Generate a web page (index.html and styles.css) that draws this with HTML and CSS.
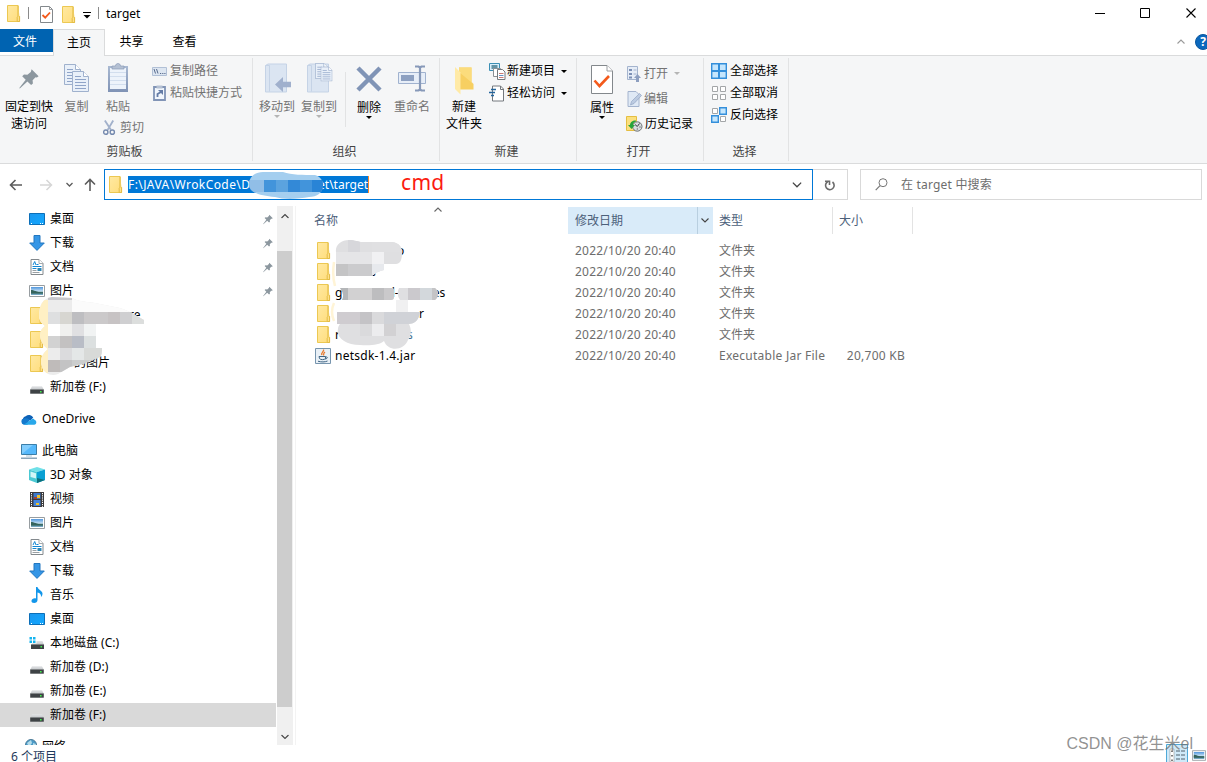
FILE: index.html
```
<!DOCTYPE html>
<html lang="zh-CN">
<head>
    <meta charset="UTF-8">
    <meta name="viewport" content="width=device-width, initial-scale=1.0">
    <title>target</title>
    <link rel="stylesheet" href="styles.css">
</head>
<body>
    <!-- icon definitions -->
    <svg class="defs" width="0" height="0">
        <defs>
            <linearGradient id="gFolder" x1="0" x2="1" y1="0" y2="1"><stop offset="0" stop-color="#ffe9a2"/><stop offset="1" stop-color="#ffdd7c"/></linearGradient>
            <linearGradient id="gBlue" x1="0" x2="1" y1="0" y2="1"><stop offset="0" stop-color="#1b96ee"/><stop offset="1" stop-color="#12a8ff"/></linearGradient>
            <linearGradient id="gDisk" x1="0" x2="0" y1="0" y2="1"><stop offset="0" stop-color="#e2e4e6"/><stop offset="1" stop-color="#c0c3c6"/></linearGradient>
            <linearGradient id="gSteel" x1="0" x2="0" y1="0" y2="1"><stop offset="0" stop-color="#a9b9d2"/><stop offset="1" stop-color="#7f92b5"/></linearGradient>
            <linearGradient id="gSky" x1="0" x2="0" y1="0" y2="1"><stop offset="0" stop-color="#4f95dc"/><stop offset=".55" stop-color="#c9e3f5"/><stop offset=".6" stop-color="#3d6d66"/><stop offset="1" stop-color="#7fb2d4"/></linearGradient>
        </defs>
        <symbol id="folder" viewBox="0 0 14 17">
            <path d="M.5.5h10.6v11h1.4v5H.5z" fill="url(#gFolder)" stroke="#ecc852"/>
            <path d="M11.1.8v10.4l-.9 1v4.3h2.4v-5.3" fill="#ffe08a" stroke="#e3bc45"/>
        </symbol>
        <symbol id="pin" viewBox="0 0 20 20">
            <path d="M12.6.3l7 7-1.7 1.2-1.4-.2-2.9 3 .3 3.1-1.8 1.6-3.7-3.6L.8 19.5l-.5-.6 6.4-8.2L3.2 7.2 5 5.5l3.4.3L11.8 3z" fill="#8c979f"/>
        </symbol>
        <symbol id="sheet" viewBox="0 0 17 21">
            <path d="M.5.5h11l5 5v15H.5z" fill="#e9f0f9" stroke="#9fb1cd"/>
            <path d="M11.500.5v5h5" fill="#fff" stroke="#9fb1cd"/>
            <path d="M3 5.500h6M3 8.500h11M3 11.500h11M3 14.500h11M3 17.500h11" stroke="#8fa4c8"/>
        </symbol>
        <symbol id="desktop" viewBox="0 0 16 12">
            <path d="M.5.5h15v11H.5z" fill="url(#gBlue)" stroke="#0c6fb8"/>
            <path d="M2 10.500h1M11 10.500h1M13 10.500h1" stroke="#fff"/>
        </symbol>
        <symbol id="download" viewBox="0 0 16 16">
            <path d="M5 .5h6V8h4.300L8 15.400.7 8H5z" fill="#3596e6" stroke="#2377c0"/>
        </symbol>
        <symbol id="document" viewBox="0 0 13 16">
            <path d="M.5.5h8l4 4v11H.5z" fill="#fff" stroke="#83898d"/>
            <path d="M8.500.5v4h4" fill="#fff" stroke="#a5aaad"/>
            <path d="M2.500 6l1.700-3.500L5.500 6M6 5.500h2M2 7.500h9M2 9.500h4" fill="none" stroke="#1287d4"/>
            <path d="M2 11.500h4M2 13.500h7" stroke="#9aa0a4"/>
            <path d="M7 9h4v3H7z" fill="#2f86b5"/>
        </symbol>
        <symbol id="picture" viewBox="0 0 16 12">
            <path d="M.5.5h15v11H.5z" fill="#fff" stroke="#979da1"/>
            <path d="M2 2h12v8H2z" fill="url(#gSky)"/>
            <path d="M2 5c3 0 5 2 12 2.500V8.500H2z" fill="#35645d"/>
        </symbol>
        <symbol id="disk" viewBox="0 0 14 8">
            <path d="M2 .3h10L14 4H0z" fill="url(#gDisk)"/>
            <path d="M.2 3.500h13.600v4.200H.2z" fill="#3e4245"/>
            <path d="M10 5h1.600v1.600H10z" fill="#41f24d"/>
        </symbol>
        <symbol id="cloud" viewBox="0 0 17 11">
            <path d="M2 6a4 4 0 0 1 3-4 5 5 0 0 1 8 1.500l-3 3z" fill="#0e62b7"/>
            <path d="M.5 8A3 3 0 0 1 3 4.500C5 3.700 7 4 9 5.500L7 11H3A3 3 0 0 1 .5 8z" fill="#1579cd"/>
            <path d="M3 11l8-5.500c1-1.500 3-1 3.500.500C17 6.500 17 11 14 11z" fill="#28a8ea"/>
        </symbol>
        <symbol id="computer" viewBox="0 0 16 15">
            <path d="M.5.5h15v10H.5z" fill="#55b8fb" stroke="#3b7ea8"/>
            <path d="M1 10V1h11z" fill="#82cdfd"/>
            <path d="M5 12h6" stroke="#a9c6d8"/>
            <path d="M0 14.200h16" stroke="#7797ae" stroke-width="1.300"/>
        </symbol>
        <symbol id="cube" viewBox="0 0 16 16">
            <path d="M8 0l8 2.500L8 5 0 2.500z" fill="#6fe0e8"/>
            <path d="M0 2.500L8 5v11l-8-3z" fill="#4cc9d3"/>
            <path d="M1.500 4.500L7 6.300v5.200L1.500 10z" fill="#d3f6f7"/>
            <path d="M8 5l8-2.500V13l-8 3z" fill="#0aa0d3"/>
            <path d="M8 11l8 2-8 3z" fill="#0c717c"/>
        </symbol>
        <symbol id="film" viewBox="0 0 14 15">
            <path d="M0 0h14v15H0z" fill="#3b3b3d"/>
            <path d="M1.500 1v14M12.500 1v14" stroke="#fff" stroke-dasharray="1.200 1"/>
            <path d="M3.500 1h7v6h-7z" fill="#3b78cd"/><path d="M3.500 8h7v6h-7z" fill="#4485dc"/>
            <path d="M7 3h3v3H7z" fill="#edc22d"/><path d="M4 5h3v2H4z" fill="#a63f32"/><path d="M6 11h3v2H6z" fill="#edc22d"/>
        </symbol>
        <symbol id="music" viewBox="0 0 12 16">
            <path d="M5 0h1.500c.5 3 5 3.500 5 6.500 0 1.500-.5 2.500-1.500 3.500.3-2.500-1-4-3.500-4.500V13c0 2-1.500 3-3.300 3S.3 15 .5 13.700c.2-1.700 2.500-2.900 4.500-2.200z" fill="#1296ea"/>
        </symbol>
        <symbol id="sysdisk" viewBox="0 0 15 12">
            <path d="M0 0h2.500v2.500H0zM3.500 0H6v2.500H3.500zM0 3.500h2.500V6H0zM3.500 3.500H6V6H3.500z" fill="#14b4ef"/>
            <path d="M7 4h6l1.500 4H1.500L3 6.500h4z" fill="url(#gDisk)"/>
            <path d="M1.500 7.500h13V12h-13z" fill="#3e4245"/><path d="M11 9h1.500v1.500H11z" fill="#41f24d"/>
        </symbol>
        <symbol id="globe" viewBox="0 0 16 16">
            <circle cx="6" cy="6" r="5.500" fill="#4b9bc8" stroke="#4a7a98"/>
            <path d="M2 4l4-3 1 3-3 4zM8 4l3 1-1 4-2-1z" fill="#b5dcea"/>
        </symbol>
        <symbol id="cross" viewBox="0 0 10 10"><path d="M.5.5l9 9M9.500.5l-9 9" stroke="#000" stroke-width="1.100"/></symbol>
        <symbol id="chev" viewBox="0 0 8 5"><path d="M.5.5L4 4 7.500.5" fill="none" stroke="currentColor" stroke-width="1.100"/></symbol>
        <symbol id="check" viewBox="0 0 22 29">
            <path d="M.5.5h15.500l5.500 5.500v22.500H.5z" fill="#fff" stroke="#83888c"/>
            <path d="M16 .5V6h5.500" fill="#fff" stroke="#9a9ea1"/>
            <path d="M3.500 15.500l5 5.500 9.500-10" fill="none" stroke="#f35a1c" stroke-width="2.600"/>
        </symbol>
        <symbol id="book" viewBox="0 0 26 30">
            <path d="M.5 2.500L3 1h18.500v28H.5z" fill="#dbe5f2" stroke="#c5d3e6"/>
            <path d="M.5 2.500h4v26" fill="none" stroke="#c5d3e6"/>
        </symbol>
    </svg>

    <div class="window">
        <header class="titlebar">
            <svg class="t-folder" width="14" height="17"><use href="#folder"/></svg>
            <i class="bar"></i>
            <svg class="t-check" width="13" height="17" viewBox="0 0 13 17"><path d="M.5.5h9l3 3v13H.5z" fill="#fff" stroke="#83888c"/><path d="M9.500.5v3h3" fill="none" stroke="#9a9ea1"/><path d="M2.500 9l2.700 2.700L10 6.500" fill="none" stroke="#f35a1c" stroke-width="1.800"/></svg>
            <svg class="t-folder2" width="14" height="17"><use href="#folder"/></svg>
            <svg class="t-more" width="8" height="7"><path d="M0 .5h8" stroke="#000"/><path d="M.5 3h7L4 6.500z"/></svg>
            <i class="bar"></i>
            <span class="title">target</span>
            <div class="controls">
                <svg width="10" height="10"><path d="M0 5.500h10" stroke="#000"/></svg>
                <svg width="10" height="10"><path d="M.5.5h9v9h-9z" fill="none" stroke="#000"/></svg>
                <svg width="10" height="10"><use href="#cross"/></svg>
            </div>
        </header>

        <nav class="tabs">
            <span class="tab file">文件</span>
            <span class="tab active">主页</span>
            <span class="tab">共享</span>
            <span class="tab">查看</span>
            <div class="help">
                <svg class="up" width="8" height="5"><use href="#chev"/></svg>
                <span class="question">?</span>
            </div>
        </nav>

        <section class="ribbon">
            <div class="group clipboard">
                <div class="tools">
                    <div class="big pinit">
                        <svg width="20" height="20"><use href="#pin"/></svg>
                        <span>固定到快<br>速访问</span>
                    </div>
                    <div class="big copy off">
                        <svg width="26" height="30" viewBox="0 0 26 30"><use href="#sheet" width="17" height="21" x="0" y="1"/><use href="#sheet" width="17" height="21" x="8" y="8"/></svg>
                        <span>复制</span>
                    </div>
                    <div class="paste">
                        <div class="big off">
                            <svg width="20" height="30" viewBox="0 0 20 30">
                                <path d="M0 3h20v26H0z" fill="url(#gSteel)"/><path d="M2 5h16v21H2z" fill="#edf3fb"/>
                                <path d="M2 9.500h16M2 13.500h16M2 17.500h16M2 21.500h16" stroke="#d2deee"/>
                                <path d="M4 6V3h3.500C7.500-.3 12.500-.3 12.500 3H16v3z" fill="#b4c0d3" stroke="#8b9bb8" stroke-width=".7"/>
                            </svg>
                            <span>粘贴</span>
                        </div>
                        <div class="small off cut">
                            <svg width="13" height="16" viewBox="0 0 14 16"><path d="M2 0l6.500 10M11 0L5 10" stroke="#a2b1cb" stroke-width="2"/><circle cx="3" cy="12.500" r="2.300" fill="none" stroke="#7489ae" stroke-width="1.500"/><circle cx="10" cy="12.500" r="2.300" fill="none" stroke="#7489ae" stroke-width="1.500"/></svg>
                            <span>剪切</span>
                        </div>
                    </div>
                    <div class="stack">
                        <div class="small off">
                            <svg width="15" height="9" viewBox="0 0 15 9"><path d="M.5.5h14v8H.5z" fill="#dde6f1" stroke="#b1c0d6"/><path d="M2 2l1.500 4.500M4.500 2L6 6.500M8 6.500h1.200M10.200 6.500h1.200M12.300 6.500h1.200" stroke="#586b8d"/></svg>
                            <span>复制路径</span>
                        </div>
                        <div class="small off">
                            <svg width="15" height="16" viewBox="-1 0 15 16"><path d="M1 2h11v13H1z" fill="#f1f6fc" stroke="#8194b6" stroke-width="1.800"/><path d="M3.500.5h6v3h-6z" fill="#b4c0d3"/><path d="M4.500 12V9L8 7" fill="none" stroke="#657ca6" stroke-width="1.800"/><path d="M5 5h5v5z" fill="#657ca6"/></svg>
                            <span>粘贴快捷方式</span>
                        </div>
                    </div>
                </div>
                <div class="caption">剪贴板</div>
            </div>

            <div class="group organize">
                <div class="tools">
                    <div class="big off">
                        <svg width="27" height="30" viewBox="0 0 27 30"><use href="#book" width="26" height="30" x="1" y="0"/><path d="M11 21.500l8-7.500v4.700h8v5.600h-8v4.700z" fill="#a0b0cd"/></svg>
                        <span>移动到</span><i class="caret"></i>
                    </div>
                    <div class="big off">
                        <svg width="27" height="30" viewBox="0 0 27 30"><use href="#book" width="26" height="30" x="1" y="0"/><use href="#sheet" width="13" height="16" x="9" y="0"/><use href="#sheet" width="12" height="15" x="14.500" y="3.500"/></svg>
                        <span>复制到</span><i class="caret"></i>
                    </div>
                    <i class="divider"></i>
                    <div class="big del">
                        <svg width="26" height="26" viewBox="0 0 26 26"><path d="M2 2l22 22M24 2L2 24" stroke="#8094b6" stroke-width="4.500"/></svg>
                        <span>删除</span><i class="caret"></i>
                    </div>
                    <div class="big off rename">
                        <svg width="28" height="27" viewBox="0 0 28 27"><path d="M.5 7.500h27v11H.5z" fill="#e7eef8" stroke="#a0b2cf"/><path d="M3 10h13v6H3z" fill="#8da0c1"/><path d="M17 1.500h3.500l1.500 1 1.500-1H27M17 25.500h3.500l1.500-1 1.500 1H27M22 2v23" fill="none" stroke="#8799b9" stroke-width="2.200"/></svg>
                        <span>重命名</span>
                    </div>
                </div>
                <div class="caption">组织</div>
            </div>

            <div class="group create">
                <div class="tools">
                    <div class="big">
                        <svg width="19" height="28" viewBox="0 0 19 28"><path d="M4 .5h12.500V15l2 2v5.500H4z" fill="#f7cf61"/><path d="M4 .5h12.500V15l2 2L4 5z" fill="#fbdc7c"/><path d="M0 0l5.500 5.500V27.500L0 22z" fill="#ffeaa6"/></svg>
                        <span>新建<br>文件夹</span>
                    </div>
                    <div class="stack">
                        <div class="small">
                            <svg width="17" height="17" viewBox="0 0 17 17"><path d="M.5.5h10v7H.5z" fill="#d8eefb" stroke="#3b8fb5"/><path d="M2.500 2h6v4h-6z" fill="#6393a5"/><path d="M4.500 5.500h7v8h-7z" fill="#fff" stroke="#8b9095"/><path d="M8.500 6.500h5l2.500 2.500v7.500H8.500z" fill="#fff" stroke="#74797e"/><path d="M10 10.500h4.500M10 14.500h4.500" stroke="#ca7b72"/><path d="M10 12.500h4.500" stroke="#6592c5"/></svg>
                            <span>新建项目</span><i class="caret"></i>
                        </div>
                        <div class="small">
                            <svg width="17" height="17" viewBox="0 0 17 17"><path d="M3.500 1h8l3 3v12h-11z" fill="#fff" stroke="#74797e"/><path d="M11.500 1v3.500h3" fill="none" stroke="#74797e"/><path d="M2 4.500h5M0 7.500h6M2 10.500h3" stroke="#24669d" stroke-width="1.300"/></svg>
                            <span>轻松访问</span><i class="caret"></i>
                        </div>
                    </div>
                </div>
                <div class="caption">新建</div>
            </div>

            <div class="group open">
                <div class="tools">
                    <div class="big prop">
                        <svg width="22" height="29"><use href="#check"/></svg>
                        <span>属性</span><i class="caret"></i>
                    </div>
                    <div class="stack">
                        <div class="small off">
                            <svg width="16" height="16" viewBox="-1 0 16 16"><path d="M.5.5h10v13H.5z" fill="#e6edf7" stroke="#a4b4ce"/><path d="M2 3h3v2H2zM2 7h3v2H2zM2 10.500h3v2H2z" fill="#7d91b6"/><path d="M6.500 4h3M6.500 8h3" stroke="#a4b4ce"/><path d="M7 12l3.500-4 3.500 4h-2v4H9v-4z" fill="#8d9fc0"/></svg>
                            <span>打开</span><i class="caret"></i>
                        </div>
                        <div class="small off">
                            <svg width="16" height="16" viewBox="-1.500 0 16 16"><path d="M.5.5h8l3 3v12H.5z" fill="#dfe9f5" stroke="#a4b4ce"/><path d="M3 14l1-3.500L12 2.500 14 4.500 6.500 12.500z" fill="#bccbe1" stroke="#92a5c3" stroke-width=".7"/></svg>
                            <span>编辑</span>
                        </div>
                        <div class="small">
                            <svg width="17" height="16" viewBox="0 0 17 16"><path d="M.5.5h10v14H.5z" fill="#fbe07e" stroke="#e5be42"/><circle cx="11.300" cy="10.500" r="4.700" fill="#d9dddf" stroke="#6d7376"/><path d="M9 8.500l2.300 2 2.200-3M11.300 13.500v-1M13.500 11h1" fill="none" stroke="#34393c"/><path d="M10 4.500C6 4 4 7 4 9H2l3.500 4L9 9H7c0-2 1-3 3-3.500z" fill="#27a33a"/></svg>
                            <span>历史记录</span>
                        </div>
                    </div>
                </div>
                <div class="caption">打开</div>
            </div>

            <div class="group select">
                <div class="tools">
                    <div class="stack">
                        <div class="small">
                            <svg width="16" height="16" viewBox="0 0 16 16"><path d="M.7.700h14.600v14.600H.7z" fill="#c5e6fd" stroke="#348fdb" stroke-width="1.400"/><path d="M8 0v16M0 8h16" stroke="#348fdb" stroke-width="2"/></svg>
                            <span>全部选择</span>
                        </div>
                        <div class="small">
                            <svg width="16" height="16" viewBox="0 0 16 16"><path d="M1.500 1.500h5v5h-5zM9.500 1.500h5v5h-5zM1.500 9.500h5v5h-5zM9.500 9.500h5v5h-5z" fill="#fff" stroke="#a3a6a8"/></svg>
                            <span>全部取消</span>
                        </div>
                        <div class="small">
                            <svg width="16" height="16" viewBox="0 0 16 16"><path d="M1.500 1.500h5v5h-5zM9.500 9.500h5v5h-5z" fill="#fff" stroke="#a3a6a8"/><path d="M8.700.700h6.600v6.600H8.700zM.7 8.700h6.600v6.600H.7z" fill="#c5e6fd" stroke="#348fdb" stroke-width="1.400"/></svg>
                            <span>反向选择</span>
                        </div>
                    </div>
                </div>
                <div class="caption">选择</div>
            </div>
        </section>

        <section class="address">
            <svg class="nav-icons" width="104" height="31" viewBox="0 0 104 31">
                <path d="M22 16H11M15.500 11L10.500 16l5 5" fill="none" stroke="#5c5c5c" stroke-width="1.600"/>
                <path d="M40 16h11M46.500 11l5 5-5 5" fill="none" stroke="#d6d6d6" stroke-width="1.500"/>
                <path d="M66.500 14l3 3 3-3" fill="none" stroke="#5c5c5c" stroke-width="1.300"/>
                <path d="M90 22V11M85 15.500l5-5 5 5" fill="none" stroke="#5c5c5c" stroke-width="1.600"/>
            </svg>
            <div class="path">
                <svg width="14" height="17"><use href="#folder"/></svg>
                <span class="selected"><span class="wide">F:\JAVA\WrokCode\D</span><span>et\target</span></span>
                <span class="cmd">cmd</span>
                <svg class="drop" width="10" height="6" viewBox="0 0 8 5"><use href="#chev"/></svg>
                <svg class="mask" width="76" height="28" viewBox="248 172 76 28">
                    <clipPath id="cPath"><path d="M249 184c0-7 6-12 14-12h20c9 3 20 3 32 3 6 2 8 6 8 10 0 8-6 12-14 12-10 2-25 3-34 0-14-1-26-4-26-13z"/></clipPath>
                    <g clip-path="url(#cPath)">
                        <path d="M248 172h76v28h-76z" fill="#a4ceef"/>
                        <path d="M248 180h76v12h-76z" fill="#4294db"/>
                        <path d="M248 180h16v12h-16z" fill="#91bee7"/><path d="M276 180h12v12h-12z" fill="#5ba3df"/><path d="M288 180h12v12h-12z" fill="#3389d7"/><path d="M312 180h12v12h-12z" fill="#2984d6"/>
                    </g>
                </svg>
            </div>
            <div class="refresh">
                <svg width="12" height="12" viewBox="0 0 12 12"><path d="M4 2.500A4.300 4.300 0 1 0 8.500 3M1 2.200h4.500V6" fill="none" stroke="#6b6b6b" stroke-width="1.600"/></svg>
            </div>
            <div class="search">
                <svg width="13" height="13" viewBox="0 0 13 13"><circle cx="8" cy="4.700" r="4" fill="none" stroke="#777"/><path d="M5 7.700L.7 12.200" stroke="#777" stroke-width="1.200"/></svg>
                <span>在 target 中搜索</span>
            </div>
        </section>

        <main class="content">
            <aside class="sidebar">
                <div class="tree">
                    <div class="node"><svg width="16" height="12"><use href="#desktop"/></svg><span>桌面</span><svg class="pin" width="10" height="11"><use href="#pin"/></svg></div>
                    <div class="node"><svg width="16" height="16"><use href="#download"/></svg><span>下载</span><svg class="pin" width="10" height="11"><use href="#pin"/></svg></div>
                    <div class="node"><svg width="16" height="16"><use href="#document"/></svg><span>文档</span><svg class="pin" width="10" height="11"><use href="#pin"/></svg></div>
                    <div class="node"><svg width="16" height="12"><use href="#picture"/></svg><span>图片</span><svg class="pin" width="10" height="11"><use href="#pin"/></svg></div>
                    <div class="node"><svg width="16" height="17"><use href="#folder"/></svg><span class="tail t1">re</span></div>
                    <div class="node"><svg width="16" height="17"><use href="#folder"/></svg></div>
                    <div class="node"><svg width="16" height="17"><use href="#folder"/></svg><span class="tail t2">的图片</span></div>
                    <div class="node drive"><svg width="16" height="8"><use href="#disk"/></svg><span>新加卷 (F:)</span></div>
                    <div class="node root"><svg width="16" height="11"><use href="#cloud"/></svg><span>OneDrive</span></div>
                    <div class="node root"><svg width="16" height="15"><use href="#computer"/></svg><span>此电脑</span></div>
                    <div class="node"><svg width="16" height="16"><use href="#cube"/></svg><span>3D 对象</span></div>
                    <div class="node"><svg width="16" height="15"><use href="#film"/></svg><span>视频</span></div>
                    <div class="node"><svg width="16" height="12"><use href="#picture"/></svg><span>图片</span></div>
                    <div class="node"><svg width="16" height="16"><use href="#document"/></svg><span>文档</span></div>
                    <div class="node"><svg width="16" height="16"><use href="#download"/></svg><span>下载</span></div>
                    <div class="node"><svg width="16" height="16"><use href="#music"/></svg><span>音乐</span></div>
                    <div class="node"><svg width="16" height="12"><use href="#desktop"/></svg><span>桌面</span></div>
                    <div class="node"><svg width="16" height="12"><use href="#sysdisk"/></svg><span>本地磁盘 (C:)</span></div>
                    <div class="node drive"><svg width="16" height="8"><use href="#disk"/></svg><span>新加卷 (D:)</span></div>
                    <div class="node drive"><svg width="16" height="8"><use href="#disk"/></svg><span>新加卷 (E:)</span></div>
                    <div class="node drive current"><svg width="16" height="8"><use href="#disk"/></svg><span>新加卷 (F:)</span></div>
                    <div class="node root net"><svg width="16" height="16"><use href="#globe"/></svg><span>网络</span></div>
                </div>
                <div class="scrollbar">
                    <svg class="s-up" width="8" height="6" viewBox="0 0 8 5"><use href="#chev"/></svg>
                    <div class="thumb"></div>
                    <svg class="s-down" width="8" height="6" viewBox="0 0 8 5"><use href="#chev"/></svg>
                </div>
                <svg class="tree-mask" width="112" height="84" viewBox="36 295 112 84">
                    <clipPath id="cTree"><path d="M39 316c0-9 3-18 13-19l20 1c5 3 15 4 23 5l25 5c4 1 7 3 10 4l14 8v4H96v24h6c0 4 0 7-2 9l-17 7-13 3-12 7c-7 3-14-1-16-7-3-8 1-14 6-18-5-3-8-9-8-14 0-4 2-7 5-9-4-3-6-6-6-10z"/></clipPath>
                    <g clip-path="url(#cTree)">
                        <path d="M36 295h112v84H36z" fill="#ececec"/>
                        <path d="M36 300h12v73H36z" fill="#fff0c4"/>
                        <path d="M48 295h24v5H48z" fill="#c8c8cb"/><path d="M72 295h76v17H72z" fill="#fbfbfb"/>
                        <path d="M48 312h12v12H48z" fill="#dedfe0"/><path d="M60 312h12v12H60z" fill="#d7d6d1"/><path d="M72 312h12v12H72z" fill="#bebec1"/><path d="M84 312h24v12H84z" fill="#cbc9ca"/><path d="M108 312h12v12h-12z" fill="#c7c3c4"/><path d="M120 312h12v12h-12z" fill="#cfcfd1"/><path d="M132 312h12v12h-12z" fill="#dcdedd"/>
                        <path d="M48 324h12v12H48z" fill="#fff"/><path d="M60 324h12v12H60z" fill="#f0f0ee"/><path d="M72 324h12v12H72z" fill="#e0e0e2"/><path d="M84 324h12v12H84z" fill="#f1f3f3"/>
                        <path d="M48 336h12v12H48z" fill="#d2d2d2"/><path d="M60 336h12v12H60z" fill="#c3c1c1"/><path d="M72 336h12v12H72z" fill="#b9bdc6"/><path d="M84 336h12v12H84z" fill="#dce0e0"/>
                        <path d="M60 348h12v12H60z" fill="#dbdbdd"/><path d="M72 348h12v12H72z" fill="#e4e7e7"/><path d="M84 348h20v12H84z" fill="#d8dad8"/>
                        <path d="M48 360h12v12H48z" fill="#bfbbba"/><path d="M60 360h12v12H60z" fill="#c3c3c4"/><path d="M72 360h30v12H72z" fill="#cbcdcd"/>
                    </g>
                </svg>
            </aside>

            <section class="files">
                <svg class="sort" width="8" height="5"><use href="#chev"/></svg>
                <div class="row head">
                    <span class="name">名称</span>
                    <span class="date">修改日期<i class="filter"><svg width="8" height="5"><use href="#chev"/></svg></i></span>
                    <span class="type">类型</span>
                    <span class="size">大小</span>
                </div>
                <div class="row"><span class="name"><svg width="14" height="17"><use href="#folder"/></svg><b class="n1">o</b></span><span class="date">2022/10/20 20:40</span><span class="type">文件夹</span></div>
                <div class="row"><span class="name"><svg width="14" height="17"><use href="#folder"/></svg><b class="n2">s</b></span><span class="date">2022/10/20 20:40</span><span class="type">文件夹</span></div>
                <div class="row"><span class="name"><svg width="14" height="17"><use href="#folder"/></svg><b>g</b><b class="n3">d-</b><b class="n4">es</b></span><span class="date">2022/10/20 20:40</span><span class="type">文件夹</span></div>
                <div class="row"><span class="name"><svg width="14" height="17"><use href="#folder"/></svg><b class="n5">r</b></span><span class="date">2022/10/20 20:40</span><span class="type">文件夹</span></div>
                <div class="row"><span class="name"><svg width="14" height="17"><use href="#folder"/></svg><b>r</b><b class="n6">s</b></span><span class="date">2022/10/20 20:40</span><span class="type">文件夹</span></div>
                <div class="row jar">
                    <span class="name">
                        <svg width="16" height="16" viewBox="0 0 16 16"><path d="M.5.5h15v15H.5z" fill="#e9f0f6" stroke="#7795ae"/><path d="M8.500 1.500c1 2-3 3-1.500 5.500M10 4c-2 1.500-1 2-1.500 3.500" fill="none" stroke="#e8792d" stroke-width="1.300"/><path d="M4 8.500h6.500v2c-1 1.500-5 1.500-6 0zM10.500 9c3-.5 2 2-.5 2M3 13.200c3 1 7 1 9.500-.2" fill="none" stroke="#3f6585"/></svg>
                        <b class="wide">netsdk-1.4.jar</b>
                    </span>
                    <span class="date">2022/10/20 20:40</span><span class="type wide">Executable Jar File</span><span class="size wide">20,700 KB</span>
                </div>
                <svg class="file-mask" width="110" height="112" viewBox="330 238 110 112">
                    <clipPath id="cFile"><path d="M336 252c-1-7 5-12 13-12 6 0 9 2 14 2h29c8 1 10 6 10 11 0 7-2 11-6 11h-12v6c-5 1-9 3-12 6h-36z"/><path d="M340 288h52q2 0 2 3v6q0 3-3 3h-49q3-6-2-12zM399 288h36c4 3 4 9 0 12h-35q-4-6-1-12z"/><path d="M396 300h12v12h12c-1 8-5 12-12 12h1c3 6 2 12-1 16-4 11-20 12-24 1-4 4-15 5-24 4-14 0-24-7-22-16 0-2 1-4 2-5h-3v-12h59z"/></clipPath>
                    <path d="M334 262q-2 14 1 24M334 303q-4 9 0 18" fill="none" stroke="#fff4d6" stroke-width="2.500"/>
                    <g clip-path="url(#cFile)">
                        <path d="M330 238h110v112H330z" fill="#dfdfe1"/>
                        <path d="M348 240h12v12h-12z" fill="#d7d7db"/><path d="M372 240h36v12h-36z" fill="#e0e0e2"/><path d="M336 252h36v12h-36z" fill="#e5e5e7"/><path d="M372 252h12v12h-12z" fill="#f1f1f3"/>
                        <path d="M336 264h12v12h-12z" fill="#c4c4c5"/><path d="M348 264h24v12h-24z" fill="#cbcbcd"/><path d="M372 264h12v12h-12z" fill="#e7e9ed"/>
                        <path d="M336 288h12v12h-12z" fill="#b4b6b8"/><path d="M348 288h24v12h-24z" fill="#d2d1d2"/><path d="M372 288h12v12h-12z" fill="#bdbdbf"/><path d="M384 288h12v12h-12z" fill="#cac9cb"/><path d="M408 288h12v12h-12z" fill="#cbc9cd"/><path d="M420 288h12v12h-12z" fill="#d3d8dc"/><path d="M432 288h8v12h-8z" fill="#c4c4c6"/>
                        <path d="M396 300h12v12h-12z" fill="#f0f0f1"/><path d="M330 312h30v12h-30z" fill="#cfccd0"/><path d="M360 312h12v12h-12z" fill="#c4c3c6"/><path d="M372 312h12v12h-12z" fill="#dadadc"/><path d="M384 312h36v12h-36z" fill="#d0d2d7"/>
                        <path d="M360 324h12v12h-12z" fill="#dadadc"/><path d="M372 324h12v12h-12z" fill="#ececee"/><path d="M384 324h12v12h-12z" fill="#d2d1d3"/>
                    </g>
                </svg>
            </section>
        </main>

        <footer class="status">
            <span>6 个项目</span>
            <div class="views">
                <div class="details"><svg width="22" height="18" viewBox="0 0 22 18"><path d="M.5.5h21v18H.5z" fill="#cfe9f8" stroke="#4fa9d8"/><path d="M4 5h4v13H4z" fill="#fff" stroke="#999" stroke-width=".6"/><path d="M6 6.500v11" stroke="#555" stroke-width="1.500" stroke-dasharray="1.500 3"/><path d="M10 7h4M15 7h4M10 11h4M15 11h4M10 15h4M15 15h4" stroke="#50606c"/></svg></div>
                <svg class="large" width="14" height="11"><use href="#picture"/></svg>
            </div>
        </footer>
        <div class="watermark">CSDN @花生米el</div>
    </div>
</body>
</html>
```
FILE: styles.css
```
* {
    box-sizing: border-box;
}
body {
    margin: 0;
    font-family: "Noto Sans", "Noto Sans CJK SC", sans-serif;
    font-size: 12px;
    line-height: 16px;
    color: #000;
    background: #fff;
}
i, b {
    font-style: normal;
    font-weight: normal;
}
svg {
    display: block;
    flex: none;
}
.defs {
    position: absolute;
}
.window {
    position: relative;
    width: 1207px;
    height: 762px;
    display: flex;
    flex-direction: column;
    overflow: hidden;
    white-space: nowrap;
}
.wide {
    letter-spacing: 0.25px;
}

/* title bar */
.titlebar {
    height: 28px;
    flex: none;
    display: flex;
    align-items: center;
    padding-left: 7px;
}
.bar {
    width: 1px;
    height: 12px;
    margin-top: -2px;
    background: #8a8a8a;
}
.t-folder {
    margin-right: 7px;
    margin-top: -2px;
}
.t-check {
    margin-left: 11px;
}
.t-folder2 {
    margin-left: 9px;
}
.t-more {
    margin: 3px 7px 0 7px;
}
.title {
    margin-left: 7px;
}
.controls {
    display: flex;
    gap: 35px;
    margin-left: auto;
    margin-right: 11px;
    margin-top: -2px;
}
.controls svg:nth-child(-n+2) {
    position: relative;
    left: -1px;
}

/* tabs */
.tabs {
    height: 28px;
    flex: none;
    display: flex;
    border-bottom: 1px solid #dadbdc;
}
.tab {
    width: 53px;
    height: 27px;
    line-height: 28px;
    text-align: center;
}
.tab.file {
    height: 23px;
    margin-top: 1px;
    line-height: 25px;
    padding-right: 3px;
    background: #0063b1;
    color: #fff;
}
.tab.active {
    width: 52px;
    height: 27px;
    margin-top: 1px;
    line-height: 25px;
    background: #f5f6f7;
    border: 1px solid #dadbdc;
    border-bottom: 0;
}
.help {
    margin-left: auto;
    width: 30px;
    display: flex;
    align-items: center;
    gap: 10px;
    color: #999;
}
.up, .s-up, .sort {
    transform: rotate(180deg);
}
.question {
    flex: none;
    width: 16px;
    height: 16px;
    border-radius: 50%;
    background: #0b68bd;
    border: 1px solid #0a579f;
    color: #fff;
    font-weight: bold;
    text-align: center;
    line-height: 14px;
}

/* ribbon */
.ribbon {
    height: 108px;
    flex: none;
    display: flex;
    background: #f5f6f7;
    border-bottom: 1px solid #dadbdc;
}
.group {
    display: flex;
    flex-direction: column;
    height: 103px;
    margin-top: 2px;
    border-right: 1px solid #e2e3e4;
}
.clipboard { width: 253px; }
.organize { width: 187px; }
.create { width: 137px; }
.open { width: 127px; }
.select { width: 85px; }
.tools {
    flex: 1;
    display: flex;
    align-items: flex-start;
    padding-top: 5px;
}
.caption {
    height: 17px;
    text-align: center;
    color: #444;
    padding-right: 3px;
}
.big {
    display: flex;
    flex-direction: column;
    align-items: center;
    text-align: center;
    line-height: 17px;
    width: 42px;
}
.big > svg {
    margin: 0 0 5px;
}
.off {
    color: #737373;
}
.pinit {
    width: 58px;
    padding-top: 6px;
}
.pinit > svg {
    margin-bottom: 9px;
}
.copy {
    width: 37px;
}
.paste .big {
    width: 46px;
}
.small {
    display: flex;
    align-items: center;
    gap: 4px;
    height: 22px;
}
.cut {
    margin: 2px 0 0 8px;
}
.clipboard .stack {
    margin-left: 8px;
    margin-top: -3px;
}
.clipboard .stack .small {
    gap: 3px;
}
.caret {
    width: 0;
    height: 0;
    border: 3px solid transparent;
    border-top-color: currentColor;
    border-bottom: 0;
}
.off .caret {
    border-top-color: #b5b5b5;
}
.organize .tools {
    padding-left: 3px;
}
.divider {
    width: 1px;
    height: 55px;
    margin-top: 9px;
    margin-left: 5px;
    background: #e2e3e4;
}
.del {
    padding-top: 3px;
    width: 46px;
}
.del > svg {
    margin-bottom: 7px;
}
.rename {
    padding-top: 2px;
    width: 40px;
}
.rename > svg {
    margin-bottom: 6px;
}
.create .big {
    width: 48px;
    padding-top: 4px;
}
.create .big > svg {
    margin-bottom: 3px;
}
.create .stack {
    margin-top: -3px;
    margin-left: 1px;
}
.create .small {
    gap: 1px;
}
.small .caret {
    margin-left: 5px;
}
.open .tools {
    padding-left: 4px;
}
.prop {
    padding-top: 2px;
}
.prop > svg {
    margin-bottom: 5px;
}
.open .stack {
    margin-left: 3px;
    margin-top: -2px;
}
.open .small {
    gap: 2px;
    height: 25px;
}
.open .off .caret {
    margin-left: 4px;
}
.select .stack {
    margin-left: 7px;
    margin-top: -3px;
}
.select .small {
    gap: 3px;
}

/* address bar */
.address {
    height: 42px;
    flex: none;
    display: flex;
    padding-top: 5px;
}
.path {
    position: relative;
    width: 709px;
    height: 31px;
    display: flex;
    align-items: center;
    border: 1px solid #0078d7;
    padding-left: 4px;
}
.selected {
    margin-left: 5px;
    width: 241px;
    height: 17px;
    line-height: 17px;
    background: #0078d7;
    color: #fff;
    border-right: 1px solid #ff8728;
    display: flex;
    justify-content: space-between;
}
.selected .wide {
    letter-spacing: 0.42px;
}
.cmd {
    margin-left: 32px;
    font-size: 21px;
    letter-spacing: 0.3px;
    margin-top: -6px;
    color: #fb1b10;
}
.drop {
    margin-left: auto;
    margin-right: 10px;
    color: #444;
}
.mask {
    position: absolute;
    left: 143px;
    top: 2px;
}
.refresh {
    width: 35px;
    height: 31px;
    border: 1px solid #d9d9d9;
    border-left: 0;
    display: flex;
    align-items: center;
    justify-content: center;
}
.search {
    width: 342px;
    height: 31px;
    margin-left: 12px;
    border: 1px solid #d9d9d9;
    display: flex;
    align-items: center;
    gap: 13px;
    padding-left: 14px;
    color: #6d6d6d;
    letter-spacing: 0.2px;
}

/* navigation tree */
.content {
    flex: none;
    height: 539px;
    display: flex;
}
.sidebar {
    position: relative;
    width: 296px;
    display: flex;
    border-right: 1px solid #f3f3f3;
}
.tree {
    width: 276px;
    padding-top: 1px;
    overflow: hidden;
}
.node {
    display: flex;
    align-items: center;
    height: 24px;
    padding-left: 29px;
    gap: 5px;
}
.node.drive > svg {
    margin-top: 6px;
}
.node.root {
    margin-top: 8px;
    padding-left: 21px;
}
.net > svg {
    margin-left: 4px;
    margin-right: -4px;
}
.current {
    background: #d9d9d9;
}
.node .pin {
    margin-left: auto;
    margin-right: 3px;
}
.t1 {
    margin-left: 79px;
}
.t2 {
    margin-left: 24px;
}
.tree-mask {
    position: absolute;
    left: 36px;
    top: 89px;
}
.scrollbar {
    width: 16px;
    margin-left: 1px;
    background: #f0f0f0;
    display: flex;
    flex-direction: column;
    align-items: center;
    padding: 7px 1px 5px 0;
    color: #444;
}
.thumb {
    width: 15px;
    height: 456px;
    margin-top: 32px;
    background: #cdcdcd;
}
.s-down {
    margin-top: auto;
}

/* file list */
.files {
    position: relative;
    flex: 1;
    padding-top: 1px;
}
.row {
    display: grid;
    grid-template-columns: 272px 145px 120px 80px;
    height: 21px;
    line-height: 21px;
    color: #6d6d6d;
}
.row.head {
    height: 27px;
    line-height: 27px;
    margin-bottom: 6px;
    color: #4c607a;
}
.name {
    display: flex;
    align-items: center;
    padding-left: 21px;
    color: #000;
}
.name > svg {
    margin-right: 4px;
}
.head .name {
    padding-left: 18px;
    color: #4c607a;
}
.jar .name > svg {
    margin: 0 4px 0 -2px;
}
.date {
    padding-left: 7px;
    letter-spacing: 0.2px;
}
.type {
    padding-left: 6px;
}
.size {
    text-align: right;
    padding-right: 8px;
}
.head .date {
    display: flex;
    justify-content: space-between;
    background: #d9ebf9;
    letter-spacing: 0;
}
.filter {
    width: 16px;
    border-left: 1px solid #b9cfe0;
    display: flex;
    align-items: center;
    padding-left: 3px;
    color: #444;
}
.head .type, .head .size {
    border-right: 1px solid #e3e3e3;
}
.head .size {
    text-align: left;
    padding-left: 6px;
}
.sort {
    position: absolute;
    left: 138px;
    top: 1px;
    color: #666;
}
.n1 { margin-left: 62px; }
.n2 { margin-left: 35px; }
.n3 { margin-left: 45px; }
.n4 { margin-left: 34px; }
.n5 { margin-left: 84px; }
.n6 {
    margin-left: 67px;
    color: #47718f;
}
.file-mask {
    position: absolute;
    left: 34px;
    top: 32px;
}

/* status bar */
.status {
    height: 17px;
    flex: none;
    display: flex;
    justify-content: space-between;
    padding: 3px 1px 0 11px;
    line-height: 17px;
    color: #1e395b;
}
.views {
    display: flex;
    align-items: flex-start;
    gap: 4px;
}
.details {
    margin-top: -4px;
}
.large {
    margin-top: 2px;
}
.watermark {
    position: absolute;
    right: 14px;
    bottom: 7px;
    font-family: "Liberation Sans", "Noto Sans CJK SC", sans-serif;
    font-size: 16px;
    line-height: 22px;
    color: rgba(110, 110, 110, 0.75);
}
```
